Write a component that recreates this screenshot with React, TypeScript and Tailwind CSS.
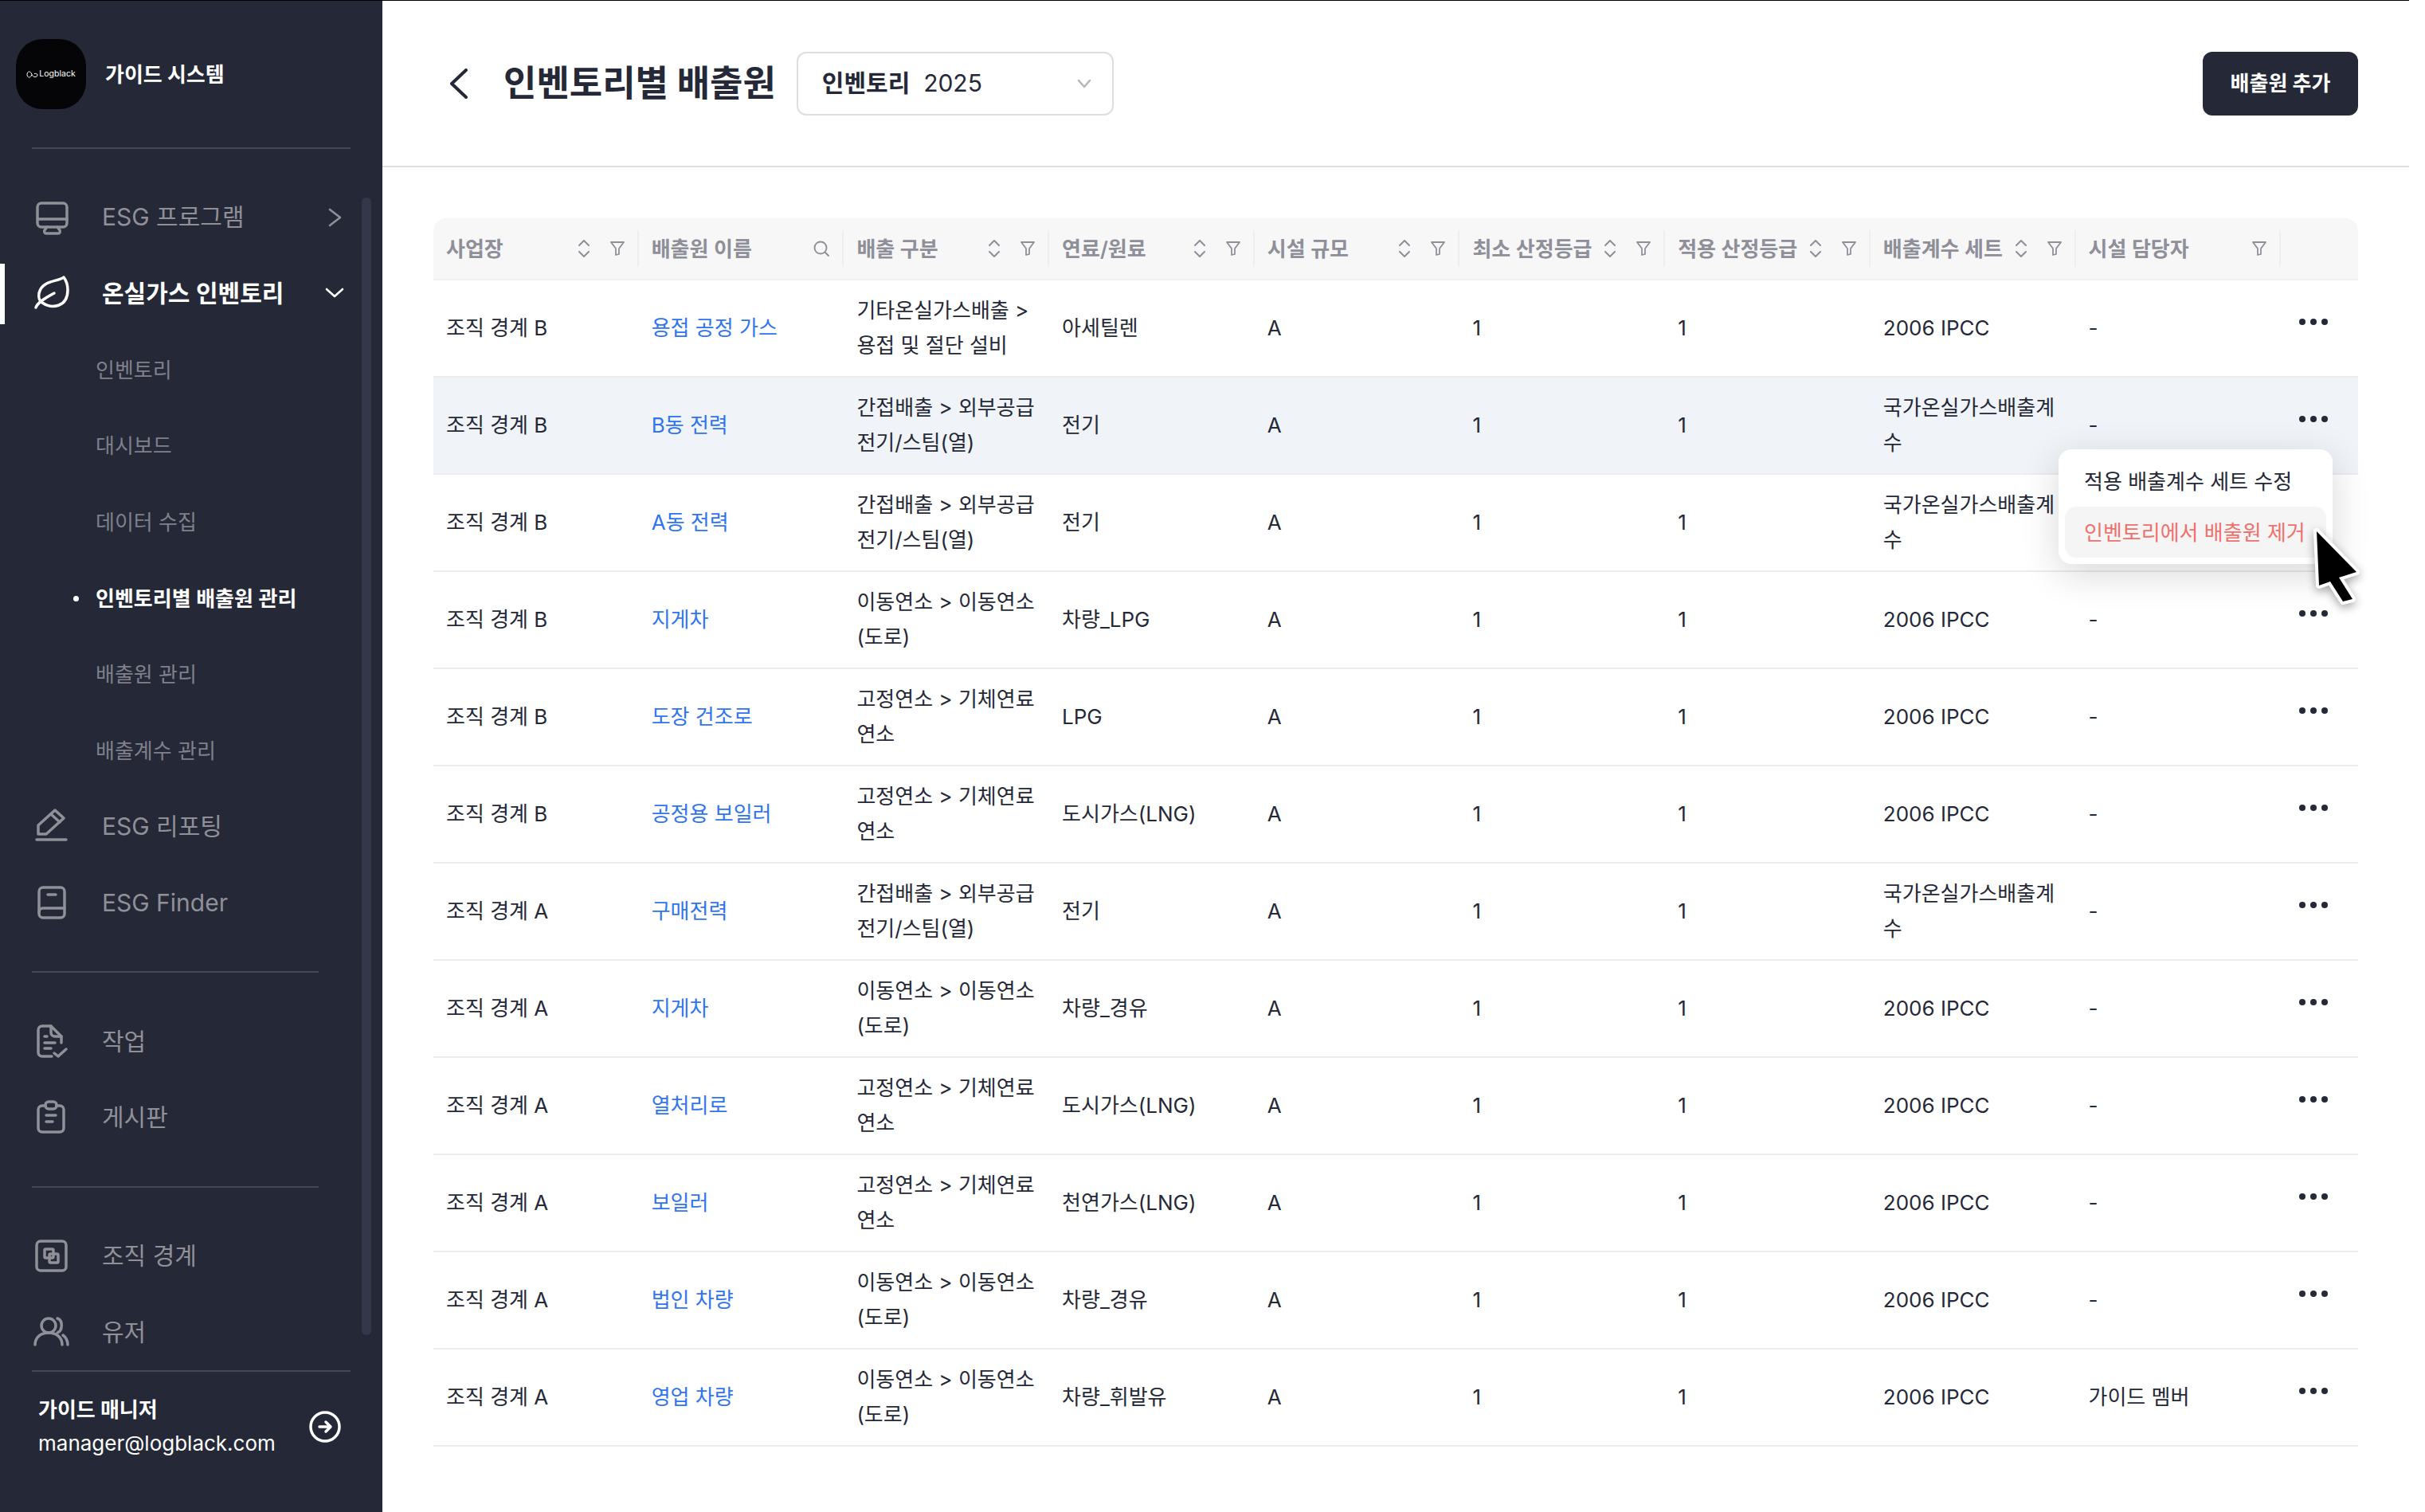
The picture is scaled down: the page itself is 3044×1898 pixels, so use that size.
import { ReactNode } from 'react';

type Row = {
  site: string;
  name: string;
  category: string;
  fuel: string;
  factor: string;
  owner: string;
  active?: boolean;
};

const IPCC = '2006 IPCC';
const NATIONAL = '국가온실가스배출계수';

const rows: Row[] = [
  { site: '조직 경계 B', name: '용접 공정 가스', category: '기타온실가스배출 > 용접 및 절단 설비', fuel: '아세틸렌', factor: IPCC, owner: '-' },
  { site: '조직 경계 B', name: 'B동 전력', category: '간접배출 > 외부공급 전기/스팀(열)', fuel: '전기', factor: NATIONAL, owner: '-', active: true },
  { site: '조직 경계 B', name: 'A동 전력', category: '간접배출 > 외부공급 전기/스팀(열)', fuel: '전기', factor: NATIONAL, owner: '-' },
  { site: '조직 경계 B', name: '지게차', category: '이동연소 > 이동연소 (도로)', fuel: '차량_LPG', factor: IPCC, owner: '-' },
  { site: '조직 경계 B', name: '도장 건조로', category: '고정연소 > 기체연료 연소', fuel: 'LPG', factor: IPCC, owner: '-' },
  { site: '조직 경계 B', name: '공정용 보일러', category: '고정연소 > 기체연료 연소', fuel: '도시가스(LNG)', factor: IPCC, owner: '-' },
  { site: '조직 경계 A', name: '구매전력', category: '간접배출 > 외부공급 전기/스팀(열)', fuel: '전기', factor: NATIONAL, owner: '-' },
  { site: '조직 경계 A', name: '지게차', category: '이동연소 > 이동연소 (도로)', fuel: '차량_경유', factor: IPCC, owner: '-' },
  { site: '조직 경계 A', name: '열처리로', category: '고정연소 > 기체연료 연소', fuel: '도시가스(LNG)', factor: IPCC, owner: '-' },
  { site: '조직 경계 A', name: '보일러', category: '고정연소 > 기체연료 연소', fuel: '천연가스(LNG)', factor: IPCC, owner: '-' },
  { site: '조직 경계 A', name: '법인 차량', category: '이동연소 > 이동연소 (도로)', fuel: '차량_경유', factor: IPCC, owner: '-' },
  { site: '조직 경계 A', name: '영업 차량', category: '이동연소 > 이동연소 (도로)', fuel: '차량_휘발유', factor: IPCC, owner: '가이드 멤버' },
];

const columns = [
  { label: '사업장', sort: true, filter: true },
  { label: '배출원 이름', search: true },
  { label: '배출 구분', sort: true, filter: true },
  { label: '연료/원료', sort: true, filter: true },
  { label: '시설 규모', sort: true, filter: true },
  { label: '최소 산정등급', sort: true, filter: true },
  { label: '적용 산정등급', sort: true, filter: true },
  { label: '배출계수 세트', sort: true, filter: true },
  { label: '시설 담당자', filter: true },
];

const Icon = ({ children }: { children: ReactNode }) => (
  <svg width="48" height="48" viewBox="0 0 48 48" fill="none" stroke="currentColor" strokeWidth="3.5" strokeLinecap="round" strokeLinejoin="round" className="shrink-0">
    {children}
  </svg>
);

const MonitorIcon = () => (
  <Icon>
    <rect x="6" y="6" width="37" height="30" rx="5" />
    <path d="M6 26h37" />
    <path d="M18 36l-3 4c-1 2 0 4 2 4h15c2 0 3-2 2-4l-3-4" />
  </Icon>
);
const LeafIcon = () => (
  <Icon>
    <path d="M39 4C32 10 12 7 8 24c-1 6 0 9 4 12 12 8 32 6 32-16 0-7-2-12-5-16Z" />
    <path d="M4 42c2-6 10-11 23-18" />
  </Icon>
);
const PenIcon = () => (
  <Icon>
    <path d="M28 3l11 10-22 20H7V22L28 3Z" />
    <path d="M23 8l11 10" />
    <path d="M5 40h37" />
  </Icon>
);
const BookIcon = () => (
  <Icon>
    <rect x="8" y="4" width="32" height="38" rx="5" />
    <path d="M8 35c0-3 2-5 5-5h27" />
    <path d="M19 13h10" />
  </Icon>
);
const TaskIcon = () => (
  <Icon>
    <path d="M24 43H12c-3 0-5-2-5-5V10c0-3 2-5 5-5h11l13 13v8" />
    <path d="M23 5v8c0 3 2 5 5 5h8" />
    <path d="M15 18h3M15 26h13M15 33h8" />
    <path d="M27 39l5 4 10-9" />
  </Icon>
);
const BoardIcon = () => (
  <Icon>
    <path d="M16 9h-4c-3 0-5 2-5 5v23c0 3 2 5 5 5h22c3 0 5-2 5-5V14c0-3-2-5-5-5h-4" />
    <rect x="16" y="4" width="14" height="9" rx="4" />
    <path d="M17 21h12M17 29h8" />
  </Icon>
);
const OrgIcon = () => (
  <Icon>
    <rect x="5" y="5" width="37" height="37" rx="5" />
    <rect x="15" y="15" width="11" height="11" rx="1.5" />
    <rect x="21" y="21" width="11" height="11" rx="1.5" />
  </Icon>
);
const UsersIcon = () => (
  <Icon>
    <circle cx="20" cy="16" r="9" />
    <path d="M3 40c0-9 7-15 17-15s17 6 17 15" />
    <path d="M31 7c7 2 7 15 0 18" />
    <path d="M38 28c4 3 6 7 6 12" />
  </Icon>
);

const Chevron = ({ open }: { open?: boolean }) => (
  <svg width="24" height="24" viewBox="0 0 24 24" fill="none" stroke="currentColor" strokeWidth="2.6" strokeLinecap="round" strokeLinejoin="round" className="shrink-0">
    {open ? <path d="M2 7l10 9 10-9" /> : <path d="M6 2l13 10-13 10" />}
  </svg>
);

const SortIcon = () => (
  <svg width="16" height="22" viewBox="0 0 16 22" fill="none" stroke="#8e8f98" strokeWidth="2" strokeLinecap="round" strokeLinejoin="round">
    <path d="M2 7l6-6 6 6" />
    <path d="M2 15l6 6 6-6" />
  </svg>
);
const FilterIcon = () => (
  <svg width="18" height="18" viewBox="0 0 18 18" fill="none" stroke="#8e8f98" strokeWidth="1.8" strokeLinecap="round" strokeLinejoin="round">
    <path d="M1 1h16l-6 8v7l-4 1V9L1 1Z" />
  </svg>
);
const SearchIcon = () => (
  <svg width="20" height="20" viewBox="0 0 20 20" fill="none" stroke="#8e8f98" strokeWidth="1.9" strokeLinecap="round">
    <circle cx="9" cy="9" r="7.5" />
    <path d="M15 15l4 4" />
  </svg>
);

const Divider = ({ short }: { short?: boolean }) => (
  <div className={short ? 'mx-[40px] w-[360px] h-[2px] bg-[#44475a] shrink-0' : 'mx-[40px] w-[400px] h-[2px] bg-[#44475a] shrink-0'} />
);

const NavItem = ({ icon, label, trail }: { icon: ReactNode; label: string; trail?: ReactNode }) => (
  <div className="flex items-center h-[96px] pl-[41px] pr-[48px] text-[30px] text-[#8f9098]">
    {icon}
    <span className="ml-[39px] flex-1">{label}</span>
    {trail}
  </div>
);

const SubItem = ({ label, active }: { label: string; active?: boolean }) => (
  <div className={active ? 'relative flex items-center h-[96px] pl-[120px] text-[26px] font-semibold text-white' : 'flex items-center h-[96px] pl-[120px] text-[26px] text-[#7f808b]'}>
    {active && <span className="absolute left-[92px] w-[7px] h-[7px] rounded-full bg-white" />}
    {label}
  </div>
);

const Sidebar = () => (
  <aside className="relative flex flex-col w-[480px] h-full shrink-0 bg-[#252837]">
    <div className="flex items-center h-[184px] pl-[20px] shrink-0">
      <div className="flex items-center justify-center w-[88px] h-[88px] rounded-[38%] bg-[#050507] text-white">
        <svg width="15" height="9" viewBox="0 0 15 9" fill="none" stroke="currentColor" strokeWidth="1" className="mr-[1px]">
          <path d="M7 4.500C6 2 5 1 3.500 1S1 2.500 1 4.500 2 8 3.500 8 6 7 7 4.500c1 2 2 3 4 3s3-1 3-2.500S12 3 10 3.500" />
        </svg>
        <span className="text-[10.5px]">Logblack</span>
      </div>
      <span className="ml-[24px] text-[26px] font-bold text-white">가이드 시스템</span>
    </div>
    <Divider />
    <nav className="flex-1 flex flex-col pt-[38px] overflow-hidden">
      <NavItem icon={<MonitorIcon />} label="ESG 프로그램" trail={<Chevron />} />
      <div className="relative flex items-center h-[96px] pl-[41px] pr-[48px] text-[30px] font-semibold text-white">
        <span className="absolute left-0 top-[10px] w-[6px] h-[76px] bg-white" />
        <LeafIcon />
        <span className="ml-[39px] flex-1">온실가스 인벤토리</span>
        <Chevron open />
      </div>
      <SubItem label="인벤토리" />
      <SubItem label="대시보드" />
      <SubItem label="데이터 수집" />
      <SubItem label="인벤토리별 배출원 관리" active />
      <SubItem label="배출원 관리" />
      <SubItem label="배출계수 관리" />
      <NavItem icon={<PenIcon />} label="ESG 리포팅" />
      <NavItem icon={<BookIcon />} label="ESG Finder" />
      <div className="mt-[38px] mb-[38px]"><Divider short /></div>
      <NavItem icon={<TaskIcon />} label="작업" />
      <NavItem icon={<BoardIcon />} label="게시판" />
      <div className="mt-[38px] mb-[38px]"><Divider short /></div>
      <NavItem icon={<OrgIcon />} label="조직 경계" />
      <NavItem icon={<UsersIcon />} label="유저" />
    </nav>
    <Divider />
    <div className="flex items-center justify-between h-[176px] pl-[48px] pr-[52px] pb-[38px] shrink-0 text-white">
      <div className="flex flex-col">
        <span className="text-[26px] leading-[42px] font-bold">가이드 매니저</span>
        <span className="text-[26px] leading-[42px]">manager@logblack.com</span>
      </div>
      <svg width="40" height="40" viewBox="0 0 40 40" fill="none" stroke="currentColor" strokeWidth="3.5" strokeLinecap="round" strokeLinejoin="round">
        <circle cx="20" cy="20" r="18" />
        <path d="M13 20h14M21 14l6 6-6 6" />
      </svg>
    </div>
    {/* scrollbar thumb */}
    <div className="absolute left-[454px] top-[247px] w-[12px] h-[1428px] rounded-full bg-[#333749]" />
  </aside>
);

const GRID = 'grid grid-cols-[repeat(9,257.7px)_1fr]';

const TableHead = () => (
  <div className={`${GRID} h-[78px] items-center rounded-t-[16px] bg-[#f7f7f8] border-b-2 border-[#efeff1]`}>
    {columns.map((col) => (
      <div key={col.label} className="flex items-center h-[46px] pl-[16px] pr-[16px] border-r-2 border-[#eeeef0] text-[26px] font-semibold text-[#8e8f98]">
        <span className="flex-1 whitespace-nowrap">{col.label}</span>
        {col.sort && <span className="mr-[25px] flex"><SortIcon /></span>}
        {col.filter && <FilterIcon />}
        {col.search && <SearchIcon />}
      </div>
    ))}
    <div />
  </div>
);

const Cell = ({ children }: { children: ReactNode }) => (
  <div className="pl-[16px] pr-[16px]">{children}</div>
);

const TableRow = ({ row }: { row: Row }) => (
  <div className={`${GRID} h-[122px] items-center border-b-2 border-[#ececef] text-[26px] leading-[44px] text-[#252837] ${row.active ? 'bg-[#f0f4f9]' : ''}`}>
    <Cell>{row.site}</Cell>
    <Cell><span className="text-[#2f74f0]">{row.name}</span></Cell>
    <Cell>{row.category}</Cell>
    <Cell>{row.fuel}</Cell>
    <Cell>A</Cell>
    <Cell>1</Cell>
    <Cell>1</Cell>
    <Cell>{row.factor}</Cell>
    <Cell>{row.owner}</Cell>
    <div className="flex justify-end gap-[6px] pr-[38px] pb-[16px]">
      <span className="w-[8px] h-[8px] rounded-full bg-[#252837]" />
      <span className="w-[8px] h-[8px] rounded-full bg-[#252837]" />
      <span className="w-[8px] h-[8px] rounded-full bg-[#252837]" />
    </div>
  </div>
);

export default function App() {
  return (
    <div className="h-screen overflow-hidden bg-white pr-[20px] [font-family:'Inter','Noto_Sans_CJK_KR',sans-serif]">
      <div className="relative flex h-full border-t border-black">
        <Sidebar />
        <main className="flex-1 min-w-0">
          <header className="flex items-center h-[209px] px-[64px] border-b-2 border-[#dddde2]">
            <svg width="24" height="38" viewBox="0 0 24 38" fill="none" stroke="#252837" strokeWidth="4" strokeLinecap="round" strokeLinejoin="round" className="ml-[20px]">
              <path d="M21 2L3 19l18 17" />
            </svg>
            <h1 className="ml-[44px] text-[45px] font-bold text-[#252837]">인벤토리별 배출원</h1>
            <div className="flex items-center ml-[26px] w-[398px] h-[80px] pl-[30px] pr-[26px] rounded-[12px] border-2 border-[#dddde2] text-[30px] text-[#252837]">
              <span className="flex-1 whitespace-pre"><span className="font-semibold">인벤토리</span>  2025</span>
              <svg width="18" height="12" viewBox="0 0 18 12" fill="none" stroke="#b5b5bd" strokeWidth="2.500" strokeLinecap="round" strokeLinejoin="round">
                <path d="M2 2l7 8 7-8" />
              </svg>
            </div>
            <button className="ml-auto w-[195px] h-[80px] rounded-[12px] bg-[#252837] text-[26px] font-bold text-white">배출원 추가</button>
          </header>
          <section className="px-[64px] pt-[64px]">
            <TableHead />
            {rows.map((row, i) => (
              <TableRow key={i} row={row} />
            ))}
          </section>
        </main>
        {/* row action menu */}
        <div className="absolute left-[2584px] top-[563px] w-[344px] h-[144px] p-[8px] rounded-[16px] bg-white shadow-[0_12px_48px_rgba(0,0,0,0.16)] text-[26px]">
          <div className="flex items-center h-[64px] pl-[24px] text-[#252837]">적용 배출계수 세트 수정</div>
          <div className="flex items-center h-[64px] pl-[24px] rounded-[14px] bg-[#f5f5f6] text-[#f0706c] whitespace-nowrap">인벤토리에서 배출원 제거</div>
        </div>
        {/* mouse cursor */}
        <svg width="80" height="120" viewBox="0 0 80 120" className="absolute left-[2895px] top-[649px] drop-shadow-[0_4px_6px_rgba(0,0,0,0.35)]">
          <path d="M13 17L63 68 41 75 58 102 46 105 30 80 16 85Z" fill="#000" stroke="#fff" strokeWidth="8" strokeLinejoin="round" paintOrder="stroke" />
        </svg>
      </div>
    </div>
  );
}
